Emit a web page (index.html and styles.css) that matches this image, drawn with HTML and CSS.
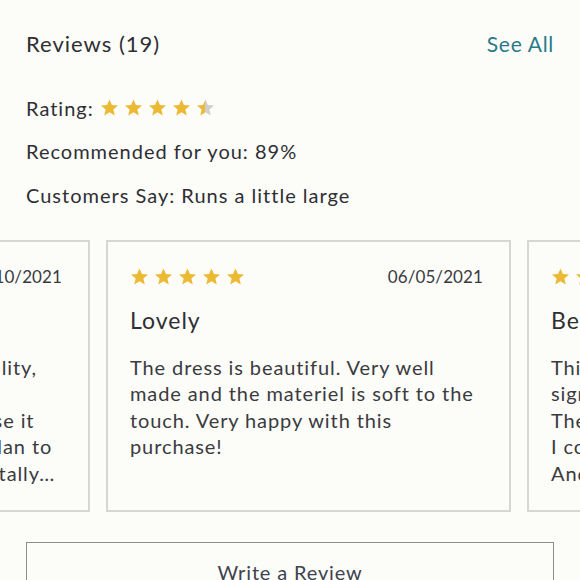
FILE: index.html
```html
<!DOCTYPE html>
<html>
<head>
<meta charset="utf-8">
<link rel="stylesheet" href="styles.css">
</head>
<body>
<svg width="0" height="0" class="defs">
  <defs>
    <symbol id="star" viewBox="0 0 24 24"><path d="M12 1.8l3.05 7.1 7.7.65-5.85 5.05 1.75 7.55L12 18.1l-6.65 4.05 1.75-7.55L1.25 9.55l7.7-.65z"/></symbol>
    <linearGradient id="half" x1="0" x2="1" y1="0" y2="0">
      <stop offset="50%" stop-color="#ebb933"/>
      <stop offset="50%" stop-color="#cfcfcf"/>
    </linearGradient>
  </defs>
</svg>
<section class="reviews">
  <div class="head">
    <h2 class="title">Reviews (19)</h2>
    <a class="see-all" href="#">See All</a>
  </div>
  <div class="summary">
    <p class="line">Rating:
      <span class="stars small">
        <svg class="star"><use href="#star"/></svg><svg class="star"><use href="#star"/></svg><svg class="star"><use href="#star"/></svg><svg class="star"><use href="#star"/></svg><svg class="star half"><use href="#star"/></svg>
      </span>
    </p>
    <p class="line">Recommended for you: 89%</p>
    <p class="line">Customers Say: Runs a little large</p>
  </div>
  <div class="carousel">
    <div class="track">
      <article class="card">
        <div class="card-top">
          <span class="stars"><svg class="star"><use href="#star"/></svg><svg class="star"><use href="#star"/></svg><svg class="star"><use href="#star"/></svg><svg class="star"><use href="#star"/></svg><svg class="star"><use href="#star"/></svg></span>
          <span class="date">05/10/2021</span>
        </div>
        <h3 class="card-title">Great</h3>
        <p class="card-body">Beautiful dress,&nbsp; and great quality,<br>fits well.<br>The color is lovely and I will use it<br>for a summer wedding that I plan to<br>and I recommend this dress totally…</p>
      </article>
      <article class="card">
        <div class="card-top">
          <span class="stars"><svg class="star"><use href="#star"/></svg><svg class="star"><use href="#star"/></svg><svg class="star"><use href="#star"/></svg><svg class="star"><use href="#star"/></svg><svg class="star"><use href="#star"/></svg></span>
          <span class="date">06/05/2021</span>
        </div>
        <h3 class="card-title">Lovely</h3>
        <p class="card-body">The dress is beautiful. Very well<br>made and the materiel is soft to the<br>touch. Very happy with this<br>purchase!</p>
      </article>
      <article class="card">
        <div class="card-top">
          <span class="stars"><svg class="star"><use href="#star"/></svg><svg class="star"><use href="#star"/></svg><svg class="star"><use href="#star"/></svg><svg class="star"><use href="#star"/></svg><svg class="star"><use href="#star"/></svg></span>
          <span class="date">06/12/2021</span>
        </div>
        <h3 class="card-title">Beautiful</h3>
        <p class="card-body">This dress is lovely and I<br>significantly enjoyed wearing it.<br>The fabric is soft and drapes well.<br>I could wear it all day long.<br>And it washes well too…</p>
      </article>
    </div>
  </div>
  <button class="write">Write a Review</button>
</section>
</body>
</html>
```
FILE: styles.css
```css
* { box-sizing: border-box; }
html, body { margin: 0; padding: 0; }
body {
  background: #fcfcf9;
  font-family: Lato, "Noto Sans", sans-serif;
  color: #2e2f33;
  width: 580px;
  height: 580px;
  overflow: hidden;
}
.defs { position: absolute; }
.reviews { padding: 0 26px; }
.head {
  display: flex;
  justify-content: space-between;
  align-items: center;
  padding-top: 28px;
  height: 58px;
}
.title {
  margin: 0;
  font-size: 22px;
  font-weight: 400;
  letter-spacing: 1px;
}
.see-all {
  color: #287a8a;
  text-decoration: none;
  font-size: 21px;
  letter-spacing: 0.7px;
}
.summary { padding-top: 28px; }
.line {
  margin: 0;
  height: 43.5px;
  font-size: 20px;
  letter-spacing: 1px;
  display: flex;
  align-items: center;
  gap: 6px;
}
.stars { display: inline-flex; gap: 5px; fill: #ebb933; }
.star { width: 19px; height: 19px; }
.star.half { fill: url(#half); }
.carousel {
  margin: 23px -26px 0;
  overflow: hidden;
}
.track {
  display: flex;
  gap: 16px;
  margin-left: -315px;
}
.card {
  flex: 0 0 405px;
  height: 272px;
  border: 2px solid #d6d6d3;
  padding: 24px 24px 0 22px;
  overflow: hidden;
}
.card-top {
  display: flex;
  justify-content: space-between;
  align-items: center;
  height: 22px;
  padding-right: 2px;
}
.date { font-size: 17px; letter-spacing: 0.1px; color: #3a3b3f; }
.card-title {
  margin: 17px 0 0;
  font-size: 23px;
  font-weight: 400;
  letter-spacing: 1px;
  line-height: 30px;
}
.card-body {
  margin: 19px 0 0;
  font-size: 20px;
  line-height: 26.5px;
  letter-spacing: 0.9px;
  color: #3a3b3f;
  white-space: nowrap;
}
.write {
  display: block;
  width: 100%;
  margin-top: 30px;
  height: 56px;
  background: transparent;
  border: 1px solid #8c8c8c;
  font-family: inherit;
  font-size: 20px;
  letter-spacing: 0.85px;
  color: #3d4350;
  padding-top: 6px;
}
```
